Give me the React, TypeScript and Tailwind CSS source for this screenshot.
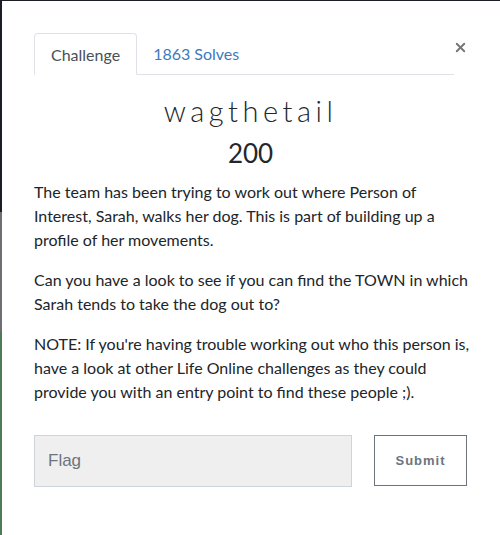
import { X } from "lucide-react";

const paragraphs = [
  "The team has been trying to work out where Person of Interest, Sarah, walks her dog. This is part of building up a profile of her movements.",
  "Can you have a look to see if you can find the TOWN in which Sarah tends to take the dog out to?",
  "NOTE: If you're having trouble working out who this person is, have a look at other Life Online challenges as they could provide you with an entry point to find these people ;).",
];

const App = () => {
  return (
    <div className="flex h-[535px] w-[500px] overflow-hidden bg-white font-['Lato','Noto_Sans',sans-serif] text-[#212529]">
      {/* backdrop showing at the left edge */}
      <div className="flex w-[2px] shrink-0 flex-col">
        <div className="h-[212px] bg-[#1b1e23]" />
        <div className="h-[120px] bg-[#6f6f73]" />
        <div className="flex-1 bg-[#4f7a58]" />
      </div>
      <div className="flex flex-1 flex-col">
        <div className="h-px bg-[#1b1e23]" />
        <div className="flex-1 pl-[32px] pr-[33px] pt-[32px]">
          <div className="flex items-end">
            <div className="flex flex-1 border-b border-[#dee2e6]">
              <div className="-mb-px rounded-t border border-[#dee2e6] border-b-white bg-white px-4 pb-[7px] pt-[9px] leading-6 text-[#495057]">
                Challenge
              </div>
              <div className="px-4 pb-[7px] pt-[9px] leading-6 text-[#3a7bbf]">1863 Solves</div>
            </div>
            <button className="mb-[20px] ml-[2px] w-[11px] self-end text-[#777]">
              <X size={15} strokeWidth={3} className="-ml-[3px]" />
            </button>
          </div>

          <h3 className="mt-[18px] text-center text-[29px] font-light leading-[36px] tracking-[4.5px] text-[#23272b]">
            wagthetail
          </h3>
          <h4 className="mt-[8px] text-center text-[26px] leading-[32px] text-[#23272b]">200</h4>

          <div className="-mr-[6px] mt-[11px] text-[16px] leading-6 text-[#212529]">
            {paragraphs.map((p, i) => (
              <p key={i} className="mb-[16px]">
                {p}
              </p>
            ))}
          </div>

          <div className="mt-[31px] flex items-start">
            <div className="flex h-[52px] w-[318px] items-center border border-[#ced4da] bg-[#efefef] px-[13px] font-['Liberation_Sans',Arial,sans-serif] text-[17px] text-[#6c757d]">
              Flag
            </div>
            <button className="ml-auto h-[51px] w-[93px] border border-[#6c757d] bg-white font-['Liberation_Sans',Arial,sans-serif] text-[13px] font-bold tracking-[1px] text-[#6c757d]">
              Submit
            </button>
          </div>
        </div>
      </div>
    </div>
  );
};

export default App;
